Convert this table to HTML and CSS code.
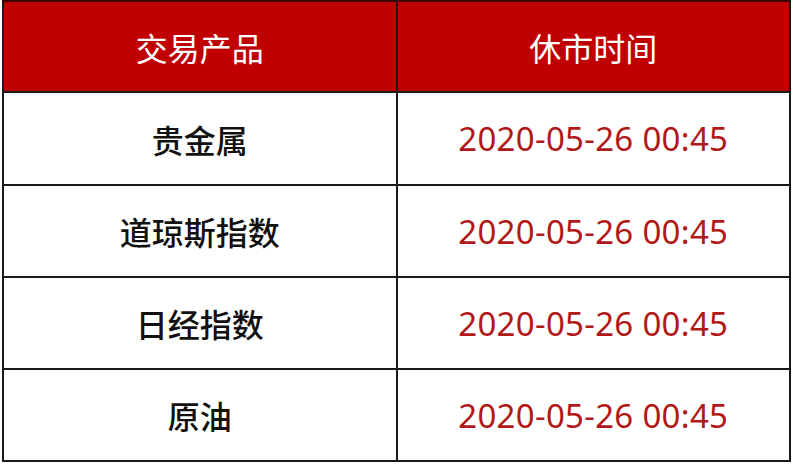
FILE: index.html
```html
<!DOCTYPE html>
<html lang="zh">
<head>
<meta charset="utf-8">
<link rel="stylesheet" href="styles.css">
</head>
<body>
<table class="sched">
  <thead>
    <tr><th>交易产品</th><th>休市时间</th></tr>
  </thead>
  <tbody>
    <tr class="first"><td class="name">贵金属</td><td class="time">2020-05-26 00:45</td></tr>
    <tr><td class="name">道琼斯指数</td><td class="time">2020-05-26 00:45</td></tr>
    <tr><td class="name">日经指数</td><td class="time">2020-05-26 00:45</td></tr>
    <tr><td class="name">原油</td><td class="time">2020-05-26 00:45</td></tr>
  </tbody>
</table>
</body>
</html>
```
FILE: styles.css
```css
html, body { margin: 0; padding: 0; background: #fff; }
body { padding-left: 2px; }
.sched {
  border-collapse: collapse;
  width: 789px;
  table-layout: fixed;
  border: 2px solid #1a1a1a;
  font-family: "Noto Sans CJK SC", sans-serif;
}
.sched th, .sched td {
  border: 2px solid #1a1a1a;
  text-align: center;
  vertical-align: middle;
  padding: 0;
}
.sched th {
  background: #c00000;
  color: #fff;
  font-weight: 400;
  font-size: 32px;
  height: 89px;
  border-color: #3a0000 #1a1a1a #1a1a1a #1a1a1a;
}
.sched td { height: 90px; }
.sched .first td { height: 91px; }
.name { color: #111; font-size: 32px; font-weight: 500; }
.time {
  color: #b11818;
  font-family: "Noto Sans", sans-serif;
  font-size: 33px;
  letter-spacing: 0.3px;
}
```
